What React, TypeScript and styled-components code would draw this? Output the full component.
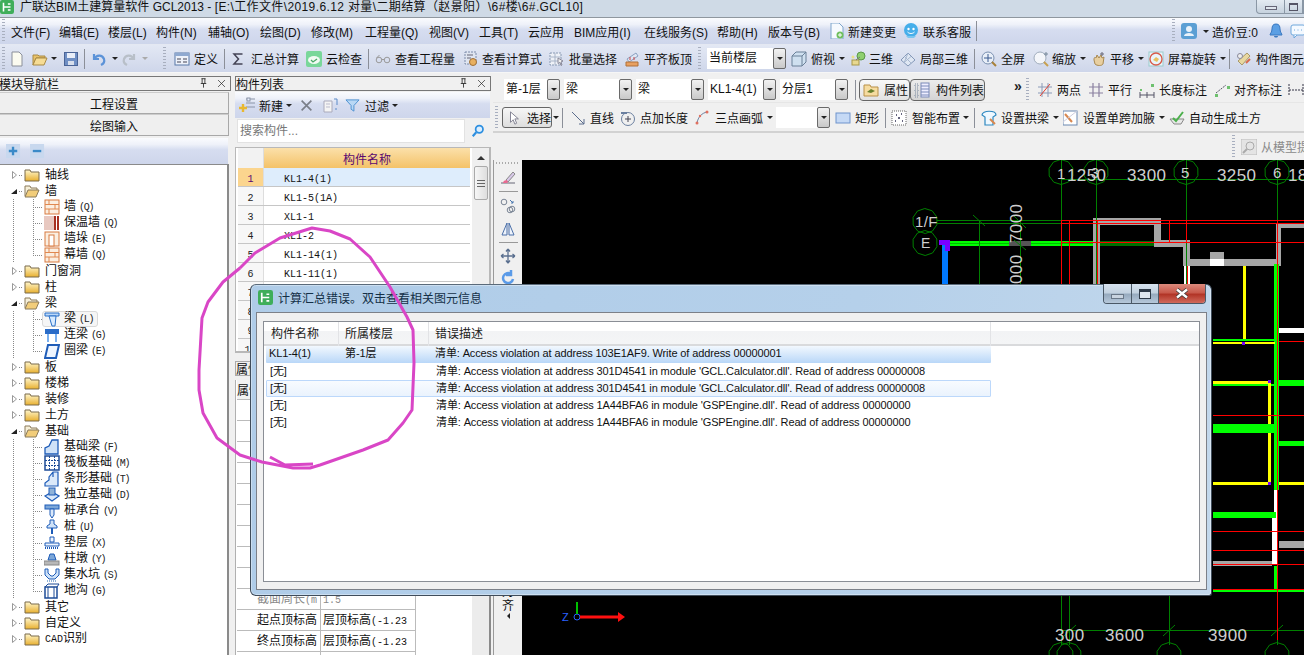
import React from 'react';
import styled, { createGlobalStyle } from 'styled-components';

const UI = '"Liberation Sans","Noto Sans CJK SC",sans-serif';
const MONO = '"Liberation Mono","Noto Sans CJK SC",monospace';

const Global = createGlobalStyle`
  html, body { margin: 0; padding: 0; background: #f0f0f0; }
  * { box-sizing: border-box; }
  body { font-family: ${UI}; font-size: 12px; color: #111; }
`;

/* ---------- icons ---------- */
const icons: Record<string, React.ReactNode> = {
  doc: <path d="M3 1h7l3 3v11H3z" fill="#fbfbf0" stroke="#8a8f9a" />,
  open: <><path d="M1 4h5l1 1h6v2H4L1 14z" fill="#e8c26a" stroke="#a98a44" /><path d="M1 14l3-7h11l-3 7z" fill="#f6dc94" stroke="#a98a44" /></>,
  save: <><rect x="1.5" y="1.5" width="13" height="13" fill="#6f8fc4" stroke="#4a6496" /><rect x="4" y="2" width="8" height="5" fill="#e9eef8" /><rect x="5" y="10" width="6" height="4" fill="#d8dfec" /></>,
  undo: <path d="M3 3v5h5M3.500 8C5 4 11 3 13 8c1 3-1 5-3 6" fill="none" stroke="#5c93d8" strokeWidth="2.2" />,
  redo: <path d="M13 3v5H8M12.500 8C11 4 5 3 3 8c-1 3 1 5 3 6" fill="none" stroke="#b8bfc8" strokeWidth="2.2" />,
  define: <><rect x="1" y="2" width="14" height="12" fill="#eef2fa" stroke="#5878a8" /><rect x="1" y="2" width="14" height="3" fill="#8fa9d0" /><path d="M3 8h4M3 11h4M9 8h4M9 11h4" stroke="#445" /></>,
  sigma: <path d="M12.500 3H4l4.500 5L4 13h8.500" fill="none" stroke="#445" strokeWidth="1.500" />,
  cloud: <><rect x="0" y="0" width="16" height="16" rx="2" fill="#79d79a" /><ellipse cx="8" cy="9" rx="6" ry="4" fill="#f2fbf4" /><path d="M5 9l2 2 4-3" fill="none" stroke="#4aa868" strokeWidth="1.300" /></>,
  glasses: <><circle cx="4" cy="9" r="2.800" fill="none" stroke="#999" /><circle cx="12" cy="9" r="2.800" fill="none" stroke="#999" /><path d="M6.800 8.500h2.400M1.500 7l3-3" stroke="#999" fill="none" /></>,
  calc: <><rect x="2" y="1" width="11" height="12" fill="#dfe5f0" stroke="#7a8aa8" strokeDasharray="2 1" /><circle cx="10" cy="11" r="3.500" fill="#e8b060" stroke="#a07038" /><path d="M4 4h6M4 7h4" stroke="#667" /></>,
  batch: <><path d="M1 2h11v12H1z" fill="#eef1f7" stroke="#8899b3" strokeDasharray="2 1" /><path d="M1 6h11M1 10h11M6 2v12" stroke="#a8b4c8" /><path d="M9 7l5 3-2 1 1 3-1 .5-1-3-2 1z" fill="#eee" stroke="#889" /></>,
  align: <><path d="M3 8l9-6 2 3-9 6z" fill="#dfe7f4" stroke="#8ba0c0" /><path d="M2 11h12v4H2z" fill="#e8a060" stroke="#b07038" /><path d="M6 9V6M10 9V6" stroke="#c44" /></>,
  cube: <><path d="M1 5l4-4h10v10l-4 4H1z" fill="#cfe0f0" stroke="#6a8098" /><path d="M1 5h10v10M11 5l4-4" fill="none" stroke="#6a8098" /></>,
  d3: <><circle cx="11" cy="5" r="4" fill="#8fd070" stroke="#5a9848" /><rect x="2" y="9" width="7" height="5" fill="#e8d890" stroke="#a89848" /><path d="M6 9l4-3" stroke="#777" /><circle cx="3" cy="6" r="1.500" fill="#e8e088" /></>,
  part3d: <><path d="M1 9l7-7 7 7-7 6z" fill="#dfe7f3" stroke="#8498b8" /><path d="M4.500 5.500l7 7M8 2l-4 10M11 5.500l-7 6" stroke="#a8b8d0" fill="none" /></>,
  full: <><circle cx="7" cy="7" r="6" fill="#e8eff8" stroke="#7a90b0" /><path d="M7 3v8M3 7h8" stroke="#3a5a90" /><path d="M11 11l4 4" stroke="#a88038" strokeWidth="2" /></>,
  zoom: <><circle cx="7" cy="7" r="6" fill="#f4f6fa" stroke="#a0adbd" /><path d="M11 11l4 4" stroke="#c8a050" strokeWidth="2" /><path d="M13 1v4M11 3h4" stroke="#789" /></>,
  pan: <><path d="M3 9c0-3 1-3 2-2l1-3 2 3 2-3 1 3 2-1-1 7c-1 2-6 2-8 0z" fill="#e8cfa0" stroke="#a88850" /><path d="M11 1v4M9 3h4" stroke="#667" /></>,
  rotate: <><rect x="1" y="1" width="14" height="14" fill="#e9f4fb" stroke="#9cc" /><circle cx="8" cy="8" r="6" fill="none" stroke="#d85a4a" strokeWidth="1.300" /><path d="M5 9l3-3 3 2-2 3z" fill="#e8c060" /></>,
  element: <><path d="M2 10l9-8 3 3-8 9z" fill="#e8d8a0" stroke="#a89868" /><path d="M10 12l4-4" stroke="#d8694a" strokeWidth="2" /><circle cx="4" cy="5" r="2.500" fill="#eee" stroke="#889" /></>,
  change: <><path d="M2 0h8l4 4v12H2z" fill="#f6fafe" stroke="#7ea5cc" /><circle cx="11" cy="12" r="3.500" fill="#6fbf5e" /><path d="M11 10v4M9 12h4" stroke="#fff" /></>,
  service: <><circle cx="8" cy="7" r="7" fill="#46aeea" /><circle cx="5.500" cy="6" r="1.200" fill="#fff" /><circle cx="10.500" cy="6" r="1.200" fill="#fff" /><path d="M4.500 9c2 2 5 2 7 0" stroke="#fff" fill="none" /><path d="M3 13h10l-2 2H5z" fill="#7cc6ef" /></>,
  user: <><rect x="0" y="0" width="16" height="16" rx="3" fill="#5b9fd4" /><circle cx="8" cy="6" r="3" fill="#e8f2fa" /><path d="M3 13c0-4 10-4 10 0z" fill="#e8f2fa" /></>,
  bell: <><path d="M8 1c-3 0-4 2-4 5 0 3-2 5-2 6h12c0-1-2-3-2-6 0-3-1-5-4-5z" fill="#5b9fe4" stroke="#3a78c0" /><path d="M6 13c0 2 4 2 4 0z" fill="#3a78c0" /></>,
  chat: <><rect x="1" y="2" width="14" height="10" rx="2" fill="#f4f9ff" stroke="#6fa8dc" /><path d="M4 12v3l3-3" fill="#f4f9ff" stroke="#6fa8dc" /><path d="M4 7h1M7.500 7h1M11 7h1" stroke="#6fa8dc" /></>,
  attr: <><path d="M1 3h6l1 2h7v9H1z" fill="#f6dca0" stroke="#b89048" /><path d="M4 10l4-3 4 2-4 2z" fill="#68802c" /></>,
  listview: <><path d="M1 2h3v3H1zM1 7h3v3H1zM1 12h3v3H1z" fill="none" stroke="#7a8aa0" strokeDasharray="1 1" /><rect x="7" y="1" width="8" height="14" fill="#eef" stroke="#7a8ab8" /><path d="M7 4h8M7 7h8M7 10h8M7 13h8" stroke="#7a8ab8" /></>,
  twopt: <><path d="M1 11h14M1 5h14M5 1v14M11 1v14" stroke="#8a9ab8" /><path d="M3 14L13 2" stroke="#e04030" /></>,
  parallel: <path d="M1 5h14M1 11h14M5 1v14M11 1v14" stroke="#8a80a0" strokeWidth="1.200" />,
  dim: <><path d="M1 13h14M1 10v6M15 10v6M8 10v6" stroke="#556" /><rect x="12" y="2" width="3" height="3" fill="#6ec06e" /><rect x="1" y="7" width="2" height="2" fill="#6ec06e" /></>,
  adim: <><path d="M2 11l10-8" stroke="#556" strokeDasharray="2 1" /><rect x="1" y="12" width="3" height="3" fill="#6ec06e" /><rect x="13" y="4" width="3" height="3" fill="#6ec06e" /></>,
  hdim: <path d="M1 8h14M1 2v12M15 2v12" stroke="#334" strokeDasharray="2 1" />,
  pointer: <path d="M4 1v12l3-3 2 5 2-1-2-5h4z" fill="#fff" stroke="#778" />,
  line: <path d="M2 2l12 12M14 9v5H9" fill="none" stroke="#5a6c8c" />,
  ptlen: <><circle cx="8" cy="9" r="6.500" fill="none" stroke="#6a7f9f" /><path d="M8 6v6M5 9h6" stroke="#445" /><path d="M1 3h6" stroke="#6a7f9f" strokeWidth="2" /></>,
  arc: <><path d="M3 13C4 7 8 3 13 2" fill="none" stroke="#6a7f9f" /><circle cx="3" cy="13" r="1.500" fill="#e07060" /><circle cx="13" cy="2" r="1.500" fill="#e07060" /><circle cx="6" cy="6" r="1.200" fill="#e07060" /></>,
  rect: <rect x="1" y="3" width="14" height="10" fill="#c5d9f5" stroke="#6f93cc" />,
  smart: <><rect x="1" y="1" width="14" height="14" fill="#fff" stroke="#666" strokeDasharray="1 1" /><path d="M5 5h1M10 4h1M7 8h2M4 11h1M11 11h1" stroke="#335" strokeWidth="1.500" /></>,
  arch: <><path d="M1 5c0-5 14-5 14 0l-3 2v8H4V7z" fill="#eef8ff" stroke="#2e88c0" strokeWidth="1.200" /><path d="M9 9l5 5" stroke="#d88850" strokeWidth="2" /></>,
  haunch: <><rect x="0" y="1" width="14" height="14" fill="#fff" stroke="#6a88b0" /><path d="M2 4l7 8" stroke="#d88850" strokeWidth="2" /><path d="M0 12l14-11" stroke="#ccd" /></>,
  earth: <><path d="M1 9l4 5h7l3-5z" fill="#e8e8e8" stroke="#888" /><path d="M4 8l3 3 7-9" fill="none" stroke="#4cb04c" strokeWidth="2" /></>,
  model: <><rect x="0" y="0" width="16" height="16" fill="#e4e4e4" stroke="#bbb" /><circle cx="9" cy="7" r="4" fill="none" stroke="#aaa" /><path d="M6 10l-4 4" stroke="#aaa" strokeWidth="2" /></>,
  addNew: <><path d="M7 2h9M7 6h9M7 10h9" stroke="#8a94a8" /><rect x="8" y="1" width="3" height="3" fill="#e8eefc" stroke="#8a94a8" /><path d="M4 7v8M0 11h8" stroke="#e8b830" strokeWidth="2.400" /></>,
  del: <path d="M2 2l12 12M14 2L2 14" stroke="#7a7f88" strokeWidth="2" />,
  copy: <><path d="M2 4h8v11H2z" fill="#f4f4f4" stroke="#aab" /><path d="M4 7h4M4 10h4" stroke="#bbc" /><path d="M12 2h3v6M15 12h-2" stroke="#5a8ac8" fill="none" /></>,
  filter: <path d="M1 2h14L9.500 8v6l-3-2V8z" fill="#b9d8f5" stroke="#4a8fd0" />,
  search: <><circle cx="9.500" cy="6" r="4.200" fill="#dbeeff" stroke="#2d8fe0" strokeWidth="2" /><path d="M6 9.500L2 14" stroke="#2d8fe0" strokeWidth="2.400" /></>,
  brush: <><path d="M1 13h14" stroke="#667" /><path d="M6 10l7-8 2 2-7 8z" fill="#d8c8e8" stroke="#888" /><path d="M3 13c0-2 2-3 4-3l1 2-1 1z" fill="#e86a90" /></>,
  rings: <><circle cx="4" cy="4" r="2.800" fill="none" stroke="#7a8595" /><circle cx="10" cy="12" r="2.800" fill="none" stroke="#7a8595" /><circle cx="12" cy="11" r="2.800" fill="none" stroke="#7a8595" /><path d="M10 2l3 3M13 3v2h-2" fill="none" stroke="#4a78b0" /></>,
  mirror: <><path d="M7 2L2 14h5zM9 2l5 12H9z" fill="#eef3fb" stroke="#4a6fa8" /></>,
  move: <path d="M8 1v14M1 8h14M8 1L6 3.500M8 1l2 2.500M8 15l-2-2.500M8 15l2-2.500M1 8l2.500-2M1 8l2.500 2M15 8l-2.500-2M15 8l-2.500 2" fill="none" stroke="#5a6f8f" strokeWidth="1.300" />,
  rotateV: <path d="M13 9a5 5 0 1 1-2-5M11 0v5h-5" fill="none" stroke="#5b9be8" strokeWidth="2.500" />,
  pin: <path d="M5 1h6M6 1v7M10 1v7M4 8h8M8 8v6" stroke="#111" fill="none" strokeWidth="1.100" />,
  cross: <path d="M3 3l10 10M13 3L3 13" stroke="#222" />,
  plus: <><rect width="15" height="15" fill="#c8d8ee" /><path d="M3 7.500h9M7.500 3v9" stroke="#3a8ac8" strokeWidth="2.500" /></>,
  minus: <><rect width="15" height="15" fill="#c8d8ee" /><path d="M3 7.500h9" stroke="#3a8ac8" strokeWidth="2.500" /></>,
  folder: <><path d="M1 14V3h5l1 2h8v9z" fill="url(#fg)" stroke="#7a6a4a" /></>,
  folderOpen: <><path d="M1 13V3h5l1 2h6v2" fill="#f6efd8" stroke="#8a7a5a" /><path d="M1 14l3-7h11l-3 7z" fill="#f2cd7a" stroke="#8a7a5a" /></>,
  brick: <><rect x="1" y="1" width="14" height="14" fill="#fbeee0" stroke="#d87a40" /><path d="M1 5.500h14M1 10h14M5 1v4.500M11 5.500V10M5 10v5" stroke="#e08850" /></>,
  insul: <><rect x="0" y="1" width="10" height="14" fill="#e8c8c0" /><rect x="10" y="1" width="2" height="14" fill="#a83020" /><rect x="13" y="1" width="2" height="14" fill="#a83020" /></>,
  pier: <><rect x="1" y="1" width="14" height="14" fill="#fbeee0" stroke="#d87a40" /><rect x="5" y="4" width="5" height="11" fill="#fff" stroke="#d87a40" /></>,
  beam: <><path d="M1 2h14v3H1z" fill="#bcd8f8" stroke="#2a70c8" /><path d="M5 5l3 10h3l1-10z" fill="#d8ebff" stroke="#2a70c8" /></>,
  linkbeam: <><rect x="1" y="2" width="14" height="5" fill="#2a6cc8" /><path d="M4 7v8M12 7v8" stroke="#7ab0f0" strokeWidth="2" /></>,
  ring: <path d="M4 2h11l-3 13H1z" fill="#eef5ff" stroke="#1e5cb8" strokeWidth="2" />,
  fbeam: <path d="M1 15V9l4-2 3-6h6v14z" fill="#cfe2f8" stroke="#1e5cb8" strokeWidth="1.300" />,
  raft: <><rect x="1" y="1" width="14" height="14" fill="#fff" stroke="#1e4c98" strokeWidth="1.500" /><path d="M1 5.500h14M1 10.500h14M5.500 1v14M10.500 1v14" stroke="#1e4c98" strokeDasharray="2 1" /></>,
  strip: <path d="M1 15v-3l4-3V6l4-5h5v14zM9 1v5" fill="#dbe9fa" stroke="#1e5cb8" strokeWidth="1.200" />,
  isolated: <><path d="M1 9l7-4 7 4-7 5z" fill="#dbe9fa" stroke="#1e5cb8" strokeWidth="1.300" /><rect x="5" y="1" width="6" height="7" fill="#8fb2d8" stroke="#1e5cb8" /></>,
  cap: <><rect x="1" y="2" width="14" height="4" fill="#7ba6d8" stroke="#1e5cb8" /><path d="M6 6h4v6l-2 3-2-3z" fill="#dbe9fa" stroke="#1e5cb8" /></>,
  pile: <><path d="M6 1h4v4l3 2v2H3V7l3-2z" fill="#cfe2f8" stroke="#1e5cb8" /><path d="M7 9h2v6H7z" fill="#1e5cb8" /></>,
  cushion: <><path d="M6 2h4v5H6zM1 8h14v3H1z" fill="#eef5ff" stroke="#1e5cb8" /><path d="M1 13h14" stroke="#1e5cb8" strokeDasharray="1 1" strokeWidth="2" /></>,
  plinth: <><path d="M6 3h4l2 6H4z" fill="#7ba6d8" stroke="#1e5cb8" /><rect x="0" y="10" width="15" height="4" fill="#b8b8b8" stroke="#888" /></>,
  pit: <><path d="M1 2h3v4l3 3h2l3-3V2h3v6l-4 4H5L1 8z" fill="#cfe2f8" stroke="#1e5cb8" /><path d="M3 14h10" stroke="#8fb2d8" strokeDasharray="1 1" strokeWidth="2" /></>,
  ditch: <><path d="M1 4h12v11H1z" fill="#fff" stroke="#1e4c98" strokeWidth="1.500" /><path d="M13 4l2-3H4L1 4M4 4v11M10 4v11" fill="none" stroke="#1e4c98" /></>,
  logo: <><rect width="16" height="16" rx="2.500" fill="#3fae5a" /><path d="M4 3v10M4 8h8M9 4.500h3M9 11.500h3" stroke="#fff" strokeWidth="1.800" fill="none" /></>,
};

const IconSvg = styled.svg<{ $s: number }>`
  width: ${p => p.$s}px;
  height: ${p => p.$s}px;
  flex: none;
  display: block;
`;

const Ico = ({ n, s = 16 }: { n: string; s?: number }) => (
  <IconSvg $s={s} viewBox="0 0 16 16" aria-hidden="true">
    {n === 'folder' && (
      <defs>
        <linearGradient id="fg" x1="0" y1="0" x2="0" y2="1">
          <stop offset="0" stopColor="#fff6cc" />
          <stop offset="1" stopColor="#e8b030" />
        </linearGradient>
      </defs>
    )}
    {icons[n]}
  </IconSvg>
);

/* ---------- shell ---------- */
const Page = styled.div`
  position: relative;
  width: 1304px;
  height: 655px;
  overflow: hidden;
  display: flex;
  flex-direction: column;
  background: #f0f0f0;
`;

const TitleBar = styled.div`
  height: 18px;
  flex: none;
  display: flex;
  align-items: flex-start;
  background: #cfdae6;
  border-bottom: 1px solid #8f979f;
`;
const TitleText = styled.div`
  margin-left: 6px;
  font-size: 12px;
  line-height: 15px;
  white-space: nowrap;
  flex: 1;
`;
const TitlePath = styled.span`
  letter-spacing: 0.38px;
`;
const MainWinBtns = styled.div`
  display: flex;
  height: 14px;
  border: 1px solid #8a97a5;
  border-top: 0;
  border-radius: 0 0 0 4px;
  background: linear-gradient(#e4ebf2, #c6d2de);
`;
const MainWinBtn = styled.div<{ $w: number }>`
  width: ${p => p.$w}px;
  display: flex;
  align-items: center;
  justify-content: center;
  border-right: 1px solid #8a97a5;
`;
const MinGlyph = styled.i`
  display: block;
  width: 12px;
  height: 4px;
  margin-top: 2px;
  border: 1px solid #667;
  background: #dfe6ee;
`;
const MaxGlyph = styled.i`
  display: block;
  width: 9px;
  height: 8px;
  border: 1px solid #556;
  border-top-width: 2px;
`;

const barGradient = `linear-gradient(#fafbfe 0%, #eef1f9 25%, #d6ddf0 45%, #ced6eb 100%)`;

const Strip = styled.div<{ $h: number; $bar?: boolean }>`
  height: ${p => p.$h}px;
  flex: none;
  display: flex;
  align-items: center;
  background: ${p => (p.$bar ? barGradient : '#f0f0f0')};
`;
const MenuBar = styled(Strip)`
  border-bottom: 1px solid #e4e8f2;
`;
const Tool = styled(Strip)`
  border-bottom: 1px solid #f6f6f6;
  background: linear-gradient(#e3e8f4, #ced6ea);
`;
const Slot = styled.div<{ $w: number }>`
  width: ${p => p.$w}px;
  flex: none;
  display: flex;
  align-items: center;
  white-space: nowrap;
`;
const Label = styled.span<{ $m?: number; $muted?: boolean }>`
  margin-left: ${p => p.$m ?? 4}px;
  font-size: 12px;
  color: ${p => (p.$muted ? '#8a8a8a' : '#111')};
  white-space: nowrap;
`;
const Caret = styled.i<{ $m?: number; $muted?: boolean }>`
  display: block;
  flex: none;
  margin-left: ${p => p.$m ?? 4}px;
  width: 0;
  height: 0;
  border: 3px solid transparent;
  border-bottom-width: 0;
  border-top: 3px solid ${p => (p.$muted ? '#aaa' : '#222')};
`;
const Sep = styled.i`
  display: block;
  width: 1px;
  height: 20px;
  background: #8b8f98;
`;
const Grip = styled.i<{ $h?: number }>`
  display: block;
  width: 3px;
  height: ${p => p.$h ?? 24}px;
  background: repeating-linear-gradient(#a8afbf 0 1px, transparent 1px 3px);
`;
const Field = styled.div<{ $w: number; $h?: number }>`
  width: ${p => p.$w}px;
  height: ${p => p.$h ?? 21}px;
  padding-left: 2px;
  background: #fff;
  font-size: 12px;
  line-height: 21px;
  overflow: hidden;
`;
const DropBtn = styled.div<{ $h?: number }>`
  width: 13px;
  height: ${p => p.$h ?? 21}px;
  display: flex;
  align-items: center;
  justify-content: center;
  border: 1px solid #6a6a6a;
  border-radius: 2px;
  background: linear-gradient(#f2f2f2, #c9c9c9);
  i {
    margin: 0;
  }
`;
const ToggleBtn = styled.div<{ $w: number; $on?: boolean }>`
  width: ${p => p.$w}px;
  height: 22px;
  display: flex;
  align-items: center;
  padding-left: 3px;
  border: 1px solid #666;
  border-radius: 4px;
  background: ${p => (p.$on ? 'linear-gradient(#f8f8f8,#e2e2e2)' : 'linear-gradient(#ececec,#d4d4d4)')};
`;
const PickBtn = styled.div`
  width: 50px;
  height: 21px;
  display: flex;
  align-items: center;
  padding-left: 4px;
  border: 1px solid #666;
  border-radius: 3px;
  background: linear-gradient(#f6f6f6, #dedede);
`;
const Chevron = styled.span`
  margin-top: -8px;
  font-size: 14px;
  font-weight: bold;
  color: #222;
  line-height: 10px;
`;

type It = {
  x: number;
  k?: 'sep' | 'grip' | 'sel' | 'pad' | 'toggle' | 'pick' | 'chev';
  i?: string;
  t?: string;
  c?: boolean;
  w?: number;
  m?: number;
  muted?: boolean;
  on?: boolean;
  cm?: number;
};

const Row = ({ items, end }: { items: It[]; end: number }) => (
  <>
    {items.map((it, idx) => {
      const next = idx < items.length - 1 ? items[idx + 1].x : end;
      const w = next - it.x;
      let body: React.ReactNode = null;
      if (it.k === 'sep') body = <Sep />;
      else if (it.k === 'grip') body = <Grip />;
      else if (it.k === 'chev') body = <Chevron>»</Chevron>;
      else if (it.k === 'sel')
        body = (
          <>
            <Field $w={it.w ?? 50}>{it.t}</Field>
            <DropBtn>
              <Caret $m={0} />
            </DropBtn>
          </>
        );
      else if (it.k === 'toggle')
        body = (
          <ToggleBtn $w={it.w ?? 50} $on={it.on}>
            {it.i && <Ico n={it.i} />}
            <Label $m={it.m}>{it.t}</Label>
          </ToggleBtn>
        );
      else if (it.k === 'pick')
        body = (
          <PickBtn>
            <Ico n="pointer" s={14} />
            <Label $m={6}>{it.t}</Label>
          </PickBtn>
        );
      else if (it.k !== 'pad')
        body = (
          <>
            {it.i && <Ico n={it.i} s={it.w ?? 16} />}
            {it.t && <Label $m={it.i ? it.m : 0} $muted={it.muted}>{it.t}</Label>}
            {it.c && <Caret $m={it.cm} $muted={it.muted} />}
          </>
        );
      return (
        <Slot key={idx} $w={w}>
          {body}
        </Slot>
      );
    })}
  </>
);

const menuItems: It[] = [
  { x: 0, k: 'pad' }, { x: 2, k: 'grip' },
  { x: 11, t: '文件(F)' }, { x: 59, t: '编辑(E)' }, { x: 108, t: '楼层(L)' }, { x: 156, t: '构件(N)' },
  { x: 208, t: '辅轴(O)' }, { x: 260, t: '绘图(D)' }, { x: 311, t: '修改(M)' }, { x: 365, t: '工程量(Q)' },
  { x: 429, t: '视图(V)' }, { x: 479, t: '工具(T)' }, { x: 528, t: '云应用' }, { x: 574, t: 'BIM应用(I)' },
  { x: 644, t: '在线服务(S)' }, { x: 717, t: '帮助(H)' }, { x: 768, t: '版本号(B)' },
  { x: 829, i: 'change', t: '新建变更', m: 3 }, { x: 903, i: 'service', t: '联系客服', m: 4 },
  { x: 976, k: 'sep' }, { x: 1172, k: 'grip' }, { x: 1181, i: 'user', c: true, cm: 6 },
  { x: 1212, t: '造价豆:0' }, { x: 1268, i: 'bell' }, { x: 1290, i: 'chat' },
];

const toolItems: It[] = [
  { x: 0, k: 'pad' }, { x: 2, k: 'grip' }, { x: 9, i: 'doc' }, { x: 32, i: 'open', c: true, cm: 3 }, { x: 63, i: 'save' },
  { x: 84, k: 'sep' }, { x: 91, i: 'undo', c: true, cm: 5 }, { x: 121, i: 'redo', c: true, cm: 5, muted: true },
  { x: 163, k: 'grip' }, { x: 174, i: 'define', t: '定义', m: 4 }, { x: 224, k: 'sep' },
  { x: 230, i: 'sigma', t: '汇总计算', m: 5 }, { x: 306, i: 'cloud', t: '云检查', m: 4 }, { x: 368, k: 'sep' },
  { x: 375, i: 'glasses', t: '查看工程量', m: 4 }, { x: 463, i: 'calc', t: '查看计算式', m: 3 },
  { x: 549, i: 'batch', t: '批量选择', m: 4 }, { x: 624, i: 'align', t: '平齐板顶', m: 4 }, { x: 698, k: 'grip' },
  { x: 707, k: 'sel', w: 66, t: '当前楼层' }, { x: 791, i: 'cube', t: '俯视', m: 4, c: true, cm: 4 },
  { x: 850, i: 'd3', t: '三维', m: 3 }, { x: 900, i: 'part3d', t: '局部三维', m: 4 }, { x: 974, k: 'sep' },
  { x: 981, i: 'full', t: '全屏', m: 4 }, { x: 1033, i: 'zoom', t: '缩放', m: 3, c: true }, { x: 1091, i: 'pan', t: '平移', m: 3, c: true },
  { x: 1148, i: 'rotate', t: '屏幕旋转', m: 4, c: true }, { x: 1229, k: 'sep' }, { x: 1236, i: 'element', t: '构件图元', m: 4 },
];

const selRowItems: It[] = [
  { x: 493, k: 'pad' },
  { x: 504, k: 'sel', w: 43, t: '第-1层' }, { x: 564, k: 'sel', w: 55, t: '梁' }, { x: 636, k: 'sel', w: 55, t: '梁' },
  { x: 708, k: 'sel', w: 55, t: 'KL1-4(1)' }, { x: 780, k: 'sel', w: 55, t: '分层1' }, { x: 855, k: 'sep' },
  { x: 859, k: 'toggle', w: 51, i: 'attr', t: '属性', m: 5, on: true }, { x: 910, k: 'toggle', w: 75, i: 'listview', t: '构件列表', m: 6 },
  { x: 1014, k: 'chev' }, { x: 1026, k: 'grip' },
  { x: 1037, i: 'twopt', t: '两点', m: 4 }, { x: 1088, i: 'parallel', t: '平行', m: 4 }, { x: 1139, i: 'dim', t: '长度标注', m: 4 },
  { x: 1214, i: 'adim', t: '对齐标注', m: 4 }, { x: 1288, i: 'hdim' },
];

const drawRowItems: It[] = [
  { x: 493, k: 'pad' }, { x: 495, k: 'grip' },
  { x: 502, k: 'pick', t: '选择' }, { x: 553, c: true, cm: 0 }, { x: 562, k: 'sep' },
  { x: 570, i: 'line', t: '直线', m: 4 }, { x: 620, i: 'ptlen', t: '点加长度', m: 4 }, { x: 694, i: 'arc', t: '三点画弧', m: 5, c: true },
  { x: 776, k: 'sel', w: 41 }, { x: 835, i: 'rect', t: '矩形', m: 4 }, { x: 885, k: 'sep' },
  { x: 891, i: 'smart', t: '智能布置', m: 5, c: true, cm: 3 }, { x: 974, k: 'sep' },
  { x: 981, i: 'arch', t: '设置拱梁', m: 4, c: true }, { x: 1063, i: 'haunch', t: '设置单跨加腋', m: 4, c: true },
  { x: 1169, i: 'earth', t: '自动生成土方', m: 4 },
];

/* ---------- left panels ---------- */
const Body = styled.div`
  flex: 1;
  min-height: 0;
  display: flex;
  padding-top: 3px;
`;
const NavPanel = styled.section`
  width: 231px;
  flex: none;
  display: flex;
  flex-direction: column;
`;
const DockHead = styled.header`
  height: 15px;
  flex: none;
  display: flex;
  align-items: center;
  border: 1px solid #777;
  border-left-width: 0;
  font-size: 12px;
  line-height: 13px;
  overflow: hidden;
`;
const DockTitle = styled.span`
  flex: 1;
  margin-left: -1px;
  padding-top: 4px;
  white-space: nowrap;
`;
const DockBtn = styled.span`
  width: 18px;
  display: flex;
  justify-content: center;
`;
const NavButton = styled.div`
  height: 22px;
  flex: none;
  width: 229px;
  display: flex;
  align-items: center;
  justify-content: center;
  font-size: 12px;
  background: #efefef;
  border: 1px solid #a8a8a8;
  border-left: 0;
  border-top-color: #ccc;
  &:first-of-type {
    margin-top: 1px;
  }
`;
const TreeTools = styled.div`
  width: 228px;
  height: 26px;
  flex: none;
  margin-top: 2px;
  display: flex;
  align-items: center;
  gap: 9px;
  padding-left: 6px;
  background: ${barGradient};
`;
const Tree = styled.div`
  width: 229px;
  flex: 1;
  padding-top: 2px;
  background: #fff;
  border: 1px solid #8a8a8a;
  border-width: 1px 2px 0 0;
  overflow: hidden;
`;
const TreeRow = styled.div`
  height: 16px;
  display: flex;
  align-items: center;
`;
const TreeLabel = styled.span<{ $m: number }>`
  margin-left: ${p => p.$m}px;
  font-family: ${UI};
  font-size: 12px;
  line-height: 16px;
  white-space: nowrap;
`;
const Hotkey = styled.span`
  margin-left: 3px;
  font-family: ${MONO};
  font-size: 10px;
  letter-spacing: -1.2px;
  color: #222;
`;
const Selected = styled.div`
  height: 16px;
  width: 56px;
  display: flex;
  align-items: center;
  margin-left: -2px;
  padding-left: 1px;
  border: 1px solid #d9d9d9;
  border-radius: 3px;
  background: #f6f6f6;
`;
const Mono = styled.span`
  font-family: ${MONO};
  font-size: 10px;
`;

const Guide = ({ w, open, child, last }: { w: number; open?: boolean; child?: boolean; last?: boolean }) => (
  <svg width={w} height="16" style={{ flex: 'none', display: 'block' }} aria-hidden="true">
    {!child &&
      (open ? (
        <path d="M11 11h6V6z" fill="#222" />
      ) : (
        <path d="M12.500 4.500v7l4-3.500z" fill="#fff" stroke="#999" />
      ))}
    {!child && <path d="M19 8.500h4" stroke="#888" strokeDasharray="1 1" />}
    {child && <path d="M13.500 0v16" stroke="#888" strokeDasharray="1 1" />}
    {child && <path d={last ? 'M33.500 0v8M33 8.500h10' : 'M33.500 0v16M33 8.500h10'} stroke="#888" strokeDasharray="1 1" fill="none" />}
  </svg>
);

const Folder = ({ t, open, mono }: { t: string; open?: boolean; mono?: string }) => (
  <TreeRow>
    <Guide w={24} open={open} />
    <Ico n={open ? 'folderOpen' : 'folder'} />
    <TreeLabel $m={5}>
      {mono && <Mono>{mono}</Mono>}
      {t}
    </TreeLabel>
  </TreeRow>
);
const Leaf = ({ i, t, h, last, sel }: { i: string; t: string; h: string; last?: boolean; sel?: boolean }) => {
  const content = (
    <>
      <Ico n={i} />
      <TreeLabel $m={4}>
        {t}
        <Hotkey>{h}</Hotkey>
      </TreeLabel>
    </>
  );
  return (
    <TreeRow>
      <Guide w={44} child last={last} />
      {sel ? <Selected>{content}</Selected> : content}
    </TreeRow>
  );
};

/* list panel */
const ListPanel = styled.section`
  width: 256px;
  flex: none;
  margin-left: 4px;
  display: flex;
  flex-direction: column;
`;
const ListHead = styled(DockHead)`
  border-left-width: 1px;
  padding-left: 1px;
`;
const ListTools = styled.div`
  height: 26px;
  margin: 1px 1px 0 0;
  flex: none;
  display: flex;
  align-items: center;
  background: ${barGradient};
`;
const SearchRow = styled.div`
  height: 26px;
  flex: none;
  display: flex;
  align-items: center;
  padding-left: 2px;
  margin-right: 1px;
  background: #f0f0f0;
`;
const SearchInput = styled.div`
  width: 228px;
  height: 24px;
  padding-left: 2px;
  background: #fff;
  border: 1px solid #e2e2e2;
  color: #777;
  font-size: 12px;
  line-height: 22px;
`;
const SearchBtn = styled.span`
  margin-left: 6px;
`;
const Grid = styled.div`
  height: 206px;
  margin-top: 3px;
  flex: none;
  display: flex;
  padding: 0 0 0 2px;
  background: #fff;
  border: 2px solid #b8b8b8;
  border-width: 1px 2px 2px 1px;
  overflow: hidden;
`;
const GridTable = styled.div`
  width: 232px;
  flex: none;
`;
const GridHeadRow = styled.div`
  display: flex;
  height: 20px;
`;
const Corner = styled.div`
  width: 26px;
  background: #f2f2f2;
  border-right: 1px solid #ddd;
`;
const GridHead = styled.div`
  flex: 1;
  display: flex;
  align-items: center;
  justify-content: center;
  background: linear-gradient(#fbe0aa, #f4c268);
  color: #5a0a70;
  font-size: 12px;
`;
const GridRow = styled.div`
  display: flex;
  height: 19px;
  border-bottom: 1px solid #c6c6c6;
`;
const RowNum = styled.div<{ $on?: boolean }>`
  width: 26px;
  text-align: center;
  font-family: ${MONO};
  font-size: 10px;
  line-height: 23px;
  height: 18px;
  overflow: hidden;
  background: ${p => (p.$on ? '#fbd58e' : '#f7f7f7')};
  color: ${p => (p.$on ? '#5a0a70' : '#222')};
  border-right: 1px solid #ddd;
`;
const RowName = styled.div<{ $on?: boolean }>`
  flex: 1;
  height: 18px;
  overflow: hidden;
  padding-left: 20px;
  font-family: ${MONO};
  font-size: 10px;
  line-height: 24px;
  background: ${p => (p.$on ? '#deedfc' : '#fff')};
`;
const ScrollBar = styled.div`
  width: 17px;
  margin-left: 2px;
  display: flex;
  flex-direction: column;
  align-items: center;
  background: #efefef;
`;
const ScrollUp = styled.i`
  display: block;
  width: 0;
  height: 0;
  margin: 8px 0 6px;
  border: 4px solid transparent;
  border-top-width: 0;
  border-bottom-color: #333;
`;
const ScrollThumb = styled.div`
  width: 14px;
  height: 34px;
  display: flex;
  align-items: center;
  justify-content: center;
  border: 1px solid #aaa;
  border-radius: 2px;
  background: linear-gradient(90deg, #f6f6f6, #dedede);
`;
const ThumbLines = styled.i`
  display: block;
  width: 8px;
  height: 7px;
  background: repeating-linear-gradient(#666 0 1px, transparent 1px 3px);
`;
const PropHead = styled(ListHead)`
  margin-top: 8px;
  border-color: #aaa;
`;
const PropWrap = styled.div`
  flex: 1;
  min-height: 0;
  margin-top: 4px;
  display: flex;
  border-left: 1px solid #b0b0b0;
  border-right: 2px solid #8a8a8a;
  background: #fff;
  overflow: hidden;
`;
const PropTable = styled.div`
  width: 236px;
  flex: none;
  padding-left: 1px;
`;
const PropStrip = styled.div`
  flex: 1;
  background: #ececec;
`;
const PropHeadRow = styled.div`
  height: 20px;
  width: 179px;
  display: grid;
  grid-template-columns: 84px 95px;
  font-size: 12px;
  line-height: 22px;
  background: #f2f2f2;
  border-bottom: 1px solid #bbb;
`;
const PropRow = styled.div`
  height: 21px;
  width: 179px;
  display: grid;
  grid-template-columns: 84px 95px;
  border-bottom: 1px solid #bbb;
  border-right: 1px solid #bbb;
`;
const PropName = styled.div<{ $muted?: boolean }>`
  padding-right: 3px;
  text-align: right;
  font-size: 12px;
  line-height: 20px;
  color: ${p => (p.$muted ? '#8a8a8a' : '#111')};
  border-right: 1px solid #bbb;
  white-space: nowrap;
`;
const PropVal = styled.div<{ $muted?: boolean }>`
  padding-left: 2px;
  font-size: 12px;
  line-height: 20px;
  color: ${p => (p.$muted ? '#8a8a8a' : '#111')};
  white-space: nowrap;
  overflow: hidden;
`;

/* right */
const Main = styled.section`
  flex: 1;
  min-width: 0;
  margin: -2px 0 0 2px;
  display: flex;
  flex-direction: column;
`;
const SelRow = styled(Strip)`
  padding-top: 3px;
  border-bottom: 1px solid #e6e6e6;
`;
const DrawRow = styled(Strip)`
  padding-top: 1px;
  border-bottom: 2px solid #d2d2d2;
`;
const ExtraRow = styled(Strip)`
  justify-content: flex-start;
`;
const CadRow = styled.div`
  flex: 1;
  min-height: 0;
  display: flex;
`;
const SideTools = styled.div`
  width: 29px;
  flex: none;
  display: flex;
  flex-direction: column;
  align-items: center;
  padding-top: 2px;
  background: #f0f0f0;
  border-left: 1px solid #9a9a9a;
`;
const SideGrip = styled.i`
  display: block;
  width: 24px;
  height: 2px;
  margin-bottom: 6px;
  background: repeating-linear-gradient(90deg, #aaa 0 1px, transparent 1px 3px);
`;
const SideBtn = styled.div<{ $mb: number }>`
  margin-bottom: ${p => p.$mb}px;
`;
const SideSep = styled.i<{ $mb: number }>`
  display: block;
  width: 19px;
  height: 1px;
  margin-bottom: ${p => p.$mb}px;
  background: #999;
`;
const SideText = styled.div`
  margin-top: 299px;
  width: 14px;
  font-size: 12px;
  line-height: 14px;
  text-align: center;
`;
const SideMark = styled.i`
  display: block;
  width: 0;
  height: 0;
  margin-top: 0;
  border: 3px solid transparent;
  border-left-width: 0;
  border-right-color: #222;
`;
const Canvas = styled.svg`
  flex: 1;
  display: block;
  background: #000;
`;

/* dialog */
const Dialog = styled.div`
  position: absolute;
  left: 250px;
  top: 284px;
  width: 962px;
  height: 312px;
  display: flex;
  flex-direction: column;
  padding: 0 4px 5px 5px;
  background: linear-gradient(100deg, #afcce8 0%, #b5d0ea 60%, #c3d8ec 100%);
  border: 1px solid #3f4c5a;
  border-top-color: #5a6a7a;
  border-radius: 6px 6px 3px 6px;
  box-shadow: inset 0 0 0 1px rgba(255, 255, 255, 0.35);
`;
const DialogTitle = styled.div`
  height: 27px;
  flex: none;
  display: flex;
  align-items: center;
  padding-left: 2px;
  padding-bottom: 2px;
  font-size: 12px;
  color: #143047;
`;
const TitleCaption = styled.span`
  margin-left: 5px;
  flex: 1;
`;
const WinBtns = styled.div`
  position: absolute;
  right: 5px;
  top: -1px;
  height: 20px;
  display: flex;
  border: 1px solid #4a5866;
  border-top: 0;
  border-radius: 0 0 4px 4px;
  overflow: hidden;
`;
const WinBtn = styled.div<{ $w: number; $close?: boolean }>`
  width: ${p => p.$w}px;
  display: flex;
  align-items: center;
  justify-content: center;
  background: ${p =>
    p.$close
      ? 'linear-gradient(#dc8a7c 0%, #c85a4c 45%, #b23527 55%, #d06a5c 100%)'
      : 'linear-gradient(#d6e2ee 0%, #c3d2e0 45%, #97abbf 55%, #b6c8da 100%)'};
  border-right: 1px solid #4a5866;
  &:last-child {
    border-right: 0;
  }
`;
const WinMin = styled.i`
  display: block;
  width: 13px;
  height: 5px;
  margin-top: 6px;
  border: 1px solid #6a7888;
  background: #c9d4e0;
`;
const WinMax = styled.i`
  display: block;
  width: 12px;
  height: 10px;
  border: 1px solid #2e3a48;
  border-top-width: 3px;
  background: #dfe7ef;
`;
const WinClose = styled.svg`
  width: 14px;
  height: 11px;
`;
const DialogBody = styled.div`
  flex: 1;
  min-height: 0;
  padding: 8px 6px 7px 6px;
  background: #f0f0f0;
  border: 1px solid #7c8088;
`;
const ErrList = styled.div`
  height: 100%;
  background: #fff;
  border: 1px solid #8a8e95;
  padding-top: 0;
`;
const ErrHead = styled.div`
  height: 24px;
  display: grid;
  grid-template-columns: 75px 90px 562px 1fr;
  background: linear-gradient(#fff 0, #fff 40%, #f2f3f5 42%, #f4f5f6 100%);
  border-bottom: 2px solid #d9dadc;
  font-size: 12px;
  line-height: 24px;
`;
const ErrHeadCell = styled.div<{ $pad: number }>`
  padding-left: ${p => p.$pad}px;
  border-right: 1px solid #e2e3e6;
  color: #222;
`;
const ErrRows = styled.div`
  margin-left: 2px;
  width: 725px;
`;
const ErrRow = styled.div<{ $state?: 'sel' | 'hover' }>`
  height: 17px;
  display: grid;
  grid-template-columns: 73px 90px 1fr;
  font-size: 11px;
  letter-spacing: -0.12px;
  line-height: 15px;
  white-space: nowrap;
  border: 1px ${p => (p.$state === 'sel' ? 'dotted #223' : 'solid')}
    ${p => (p.$state === 'sel' ? '#223' : p.$state === 'hover' ? '#bcd8fb' : 'transparent')};
  border-radius: 1px;
  background: ${p =>
    p.$state === 'sel' ? 'linear-gradient(#f2f8fe, #b9d7f8)' : p.$state === 'hover' ? 'linear-gradient(#f8fbff,#eaf3fd)' : 'transparent'};
`;
const ErrCell = styled.div<{ $pad: number }>`
  padding-left: ${p => p.$pad}px;
  overflow: visible;
`;

const Overlay = styled.svg`
  position: absolute;
  left: 0;
  top: 0;
  pointer-events: none;
`;

/* ---------- CAD drawing ---------- */
const ring = (cx: number, cy: number, r: number) =>
  Array.from({ length: 10 }, (_, i) => {
    const a = (i * Math.PI) / 5 + 0.3;
    return `${(cx + r * Math.cos(a)).toFixed(1)},${(cy + r * Math.sin(a)).toFixed(1)}`;
  }).join(' ');

type R = [number, number, number, number, string];
const G = '#00ff00';
const Y = '#ffff00';
const W = '#ffffff';
const A = '#a6a6a6';
const RD = '#ff0000';
const D = '#008000';
const rects: R[] = [
  [942, 245, 6, 40, '#0078ff'],
  [939, 240, 11, 5, '#7a00ff'], [945, 245, 5, 6, '#7a00ff'],
  [950, 241, 146, 5, G], [950, 243, 146, 1, '#0b0'], [1009, 241, 22, 5, '#555'],
  [1096, 241, 90, 5, '#007000'],
  [1093, 218, 68, 7, A], [1093, 218, 7, 67, A], [1154, 225, 7, 22, A], [1154, 240, 35, 7, A],
  [1183, 240, 7, 26, A], [1183, 259, 98, 7, A], [1210, 252, 14, 7, A], [1210, 259, 14, 7, W],
  [1276, 223, 5, 43, A], [1276, 223, 28, 5, A],
  [1184, 266, 6, 19, W], [1186, 266, 2, 19, RD],
  [1243, 266, 3, 74, Y], [1274, 264, 5, 226, G],
  [1213, 339, 62, 2, G], [1213, 342, 62, 2, Y], [1242, 342, 3, 3, '#7a00ff'],
  [1279, 328, 25, 5, W],
  [1213, 381, 57, 3, Y], [1213, 384, 62, 2, G], [1279, 380, 25, 6, G], [1268, 381, 3, 102, Y], [1268, 380, 3, 3, '#7a00ff'],
  [1213, 424, 62, 9, G], [1279, 441, 25, 5, G],
  [1213, 482, 57, 3, Y], [1279, 482, 25, 3, Y], [1268, 482, 3, 3, '#7a00ff'],
  [1274, 490, 4, 28, W], [1272, 518, 5, 46, W], [1213, 512, 63, 6, G],
  [1213, 561, 59, 5, A], [1279, 541, 25, 7, A], [1274, 566, 4, 24, G], [1213, 590, 91, 2, G],
];
const reds: [number, number, number, number][] = [
  [1061, 220.5, 1304, 220.5], [1061, 223.5, 1304, 223.5], [1061, 242.5, 1304, 242.5],
  [1061.5, 220, 1061.5, 285], [1069.5, 220, 1069.5, 285], [1097.5, 220, 1097.5, 285], [1169.5, 220, 1169.5, 243],
  [1186.5, 220, 1186.5, 243], [1277.5, 220, 1277.5, 640],
  [1279, 341.5, 1304, 341.5], [1213, 415.5, 1304, 415.5], [1213, 531.5, 1304, 531.5], [1213, 550.5, 1304, 550.5],
  [1213, 564.5, 1304, 564.5], [1213, 589.5, 1304, 589.5],
];
const greens: [number, number, number, number][] = [
  [1061, 179.5, 1304, 179.5], [937, 220.5, 1061, 220.5], [937, 223.5, 1061, 223.5],
  [1061.5, 160, 1061.5, 284], [1096.5, 160, 1096.5, 284], [1186.5, 160, 1186.5, 284], [1277.5, 160, 1277.5, 284],
  [979.5, 220, 979.5, 284], [1020.5, 222, 1020.5, 284], [973, 215, 985, 226], [1014, 216, 1026, 228], [1014, 240, 1026, 250],
  [1061.5, 596, 1061.5, 645], [1069.5, 596, 1069.5, 645], [1169.5, 596, 1169.5, 645], [1277.5, 590, 1277.5, 645],
  [1060, 630.5, 1304, 630.5], [1064, 636, 1076, 625], [1163, 636, 1175, 625], [1271, 636, 1283, 625],
];
const cadText: [string, number, number][] = [
  ['1250', 1067, 181], ['3300', 1127, 181], ['3250', 1217, 181], ['18', 1288, 181],
  ['300', 1055, 641], ['3600', 1105, 641], ['3900', 1208, 641],
];
const CadText = styled.text<{ $s?: number }>`
  font-family: "Liberation Sans", sans-serif;
  font-size: ${p => p.$s ?? 17}px;
  fill: #cfcfcf;
  letter-spacing: 0.4px;
`;

const CadDrawing = () => (
  <Canvas viewBox="522 160 782 495" width="782" height="495">
    {rects.map(([x, y, w, h, c], i) => (
      <rect key={i} x={x} y={y} width={w} height={h} fill={c} />
    ))}
    {greens.map(([a, b, c, d], i) => (
      <line key={i} x1={a} y1={b} x2={c} y2={d} stroke={D} />
    ))}
    {reds.map(([a, b, c, d], i) => (
      <line key={i} x1={a} y1={b} x2={c} y2={d} stroke={RD} />
    ))}
    {[[1061, 172], [1096, 172], [1186, 172], [1277, 172], [925, 221], [925, 243], [1061, 655], [1069, 655], [1169, 655], [1277, 655]].map(([x, y], i) => (
      <polygon key={i} points={ring(x, y, 12.5)} fill="none" stroke={D} />
    ))}
    {cadText.map(([t, x, y], i) => (
      <CadText key={i} x={x} y={y}>{t}</CadText>
    ))}
    <CadText x={1057} y={179} $s={15}>1</CadText>
    <CadText x={1091} y={178} $s={14}>3</CadText>
    <CadText x={1181} y={178} $s={15}>5</CadText>
    <CadText x={1273} y={178} $s={15}>6</CadText>
    <CadText x={915} y={227} $s={15}>1/F</CadText>
    <CadText x={921} y={248} $s={14}>E</CadText>
    <CadText transform="translate(1022 243) rotate(-90)" $s={17}>7000</CadText>
    <CadText transform="translate(1022 284) rotate(-90)" $s={17}>000</CadText>
    <text x="562" y="621" fill="#2a62ff" fontFamily="Liberation Sans, sans-serif" fontSize="11">Z</text>
    <circle cx="577" cy="617" r="3" fill="none" stroke="#2a62ff" />
    <path d="M577 614v-12" stroke="#00c000" strokeWidth="2" />
    <path d="M580 617h40" stroke="#ff1010" strokeWidth="3" />
    <path d="M618 612l7 5-7 5z" fill="#ff1010" />
  </Canvas>
);

const errs: { a: string; b?: string; c: string; s?: 'sel' | 'hover' }[] = [
  { a: 'KL1-4(1)', b: '第-1层', c: "清单: Access violation at address 103E1AF9. Write of address 00000001", s: 'sel' },
  { a: '[无]', c: "清单: Access violation at address 301D4541 in module 'GCL.Calculator.dll'. Read of address 00000008" },
  { a: '[无]', c: "清单: Access violation at address 301D4541 in module 'GCL.Calculator.dll'. Read of address 00000008", s: 'hover' },
  { a: '[无]', c: "清单: Access violation at address 1A44BFA6 in module 'GSPEngine.dll'. Read of address 00000000" },
  { a: '[无]', c: "清单: Access violation at address 1A44BFA6 in module 'GSPEngine.dll'. Read of address 00000000" },
];

const listNames = ['KL1-4(1)', 'KL1-5(1A)', 'XL1-1', 'XL1-2', 'KL1-14(1)', 'KL1-11(1)', '', '', '', ''];

export default function App() {
  return (
    <>
      <Global />
      <Page>
        <TitleBar>
          <Ico n="logo" s={14} />
          <TitleText>
            广联达BIM土建算量软件 GCL2013 - <TitlePath>[E:\工作文件\2019.6.12 对量\二期结算（赵景阳）\6#楼\6#.GCL10]</TitlePath>
          </TitleText>
          <MainWinBtns>
            <MainWinBtn $w={28}><MinGlyph /></MainWinBtn>
            <MainWinBtn $w={18}><MaxGlyph /></MainWinBtn>
          </MainWinBtns>
        </TitleBar>
        <MenuBar $h={27} $bar>
          <Row items={menuItems} end={1304} />
        </MenuBar>
        <Tool $h={28}>
          <Row items={toolItems} end={1304} />
        </Tool>
        <Body>
          <NavPanel>
            <DockHead>
              <DockTitle>模块导航栏</DockTitle>
              <DockBtn><Ico n="pin" s={11} /></DockBtn>
              <DockBtn><Ico n="cross" s={11} /></DockBtn>
            </DockHead>
            <NavButton>工程设置</NavButton>
            <NavButton>绘图输入</NavButton>
            <TreeTools>
              <Ico n="plus" s={15} />
              <Ico n="minus" s={15} />
            </TreeTools>
            <Tree>
              <Folder t="轴线" />
              <Folder t="墙" open />
              <Leaf i="brick" t="墙" h="(Q)" />
              <Leaf i="insul" t="保温墙" h="(Q)" />
              <Leaf i="pier" t="墙垛" h="(E)" />
              <Leaf i="brick" t="幕墙" h="(Q)" last />
              <Folder t="门窗洞" />
              <Folder t="柱" />
              <Folder t="梁" open />
              <Leaf i="beam" t="梁" h="(L)" sel />
              <Leaf i="linkbeam" t="连梁" h="(G)" />
              <Leaf i="ring" t="圈梁" h="(E)" last />
              <Folder t="板" />
              <Folder t="楼梯" />
              <Folder t="装修" />
              <Folder t="土方" />
              <Folder t="基础" open />
              <Leaf i="fbeam" t="基础梁" h="(F)" />
              <Leaf i="raft" t="筏板基础" h="(M)" />
              <Leaf i="strip" t="条形基础" h="(T)" />
              <Leaf i="isolated" t="独立基础" h="(D)" />
              <Leaf i="cap" t="桩承台" h="(V)" />
              <Leaf i="pile" t="桩" h="(U)" />
              <Leaf i="cushion" t="垫层" h="(X)" />
              <Leaf i="plinth" t="柱墩" h="(Y)" />
              <Leaf i="pit" t="集水坑" h="(S)" />
              <Leaf i="ditch" t="地沟" h="(G)" last />
              <Folder t="其它" />
              <Folder t="自定义" />
              <Folder t="识别" mono="CAD" />
            </Tree>
          </NavPanel>
          <ListPanel>
            <ListHead>
              <DockTitle>构件列表</DockTitle>
              <DockBtn><Ico n="pin" s={11} /></DockBtn>
              <DockBtn><Ico n="cross" s={11} /></DockBtn>
            </ListHead>
            <ListTools>
              <Row
                end={256}
                items={[
                  { x: 0, k: 'pad' },
                  { x: 4, i: 'addNew', t: '新建', m: 4, c: true, cm: 3 },
                  { x: 65, i: 'del', w: 13 },
                  { x: 87, i: 'copy' },
                  { x: 110, i: 'filter', w: 15, t: '过滤', m: 5, c: true, cm: 3 },
                ]}
              />
            </ListTools>
            <SearchRow>
              <SearchInput>搜索构件...</SearchInput>
              <SearchBtn><Ico n="search" s={14} /></SearchBtn>
            </SearchRow>
            <Grid>
              <GridTable>
                <GridHeadRow>
                  <Corner />
                  <GridHead>构件名称</GridHead>
                </GridHeadRow>
                {listNames.map((n, i) => (
                  <GridRow key={i}>
                    <RowNum $on={i === 0}>{i + 1}</RowNum>
                    <RowName $on={i === 0}>{n}</RowName>
                  </GridRow>
                ))}
              </GridTable>
              <ScrollBar>
                <ScrollUp />
                <ScrollThumb><ThumbLines /></ScrollThumb>
              </ScrollBar>
            </Grid>
            <PropHead>
              <DockTitle>属性编辑器</DockTitle>
            </PropHead>
            <PropWrap>
              <PropTable>
                <PropHeadRow>
                  <span>属性名称</span>
                  <span>属性值</span>
                </PropHeadRow>
                {Array.from({ length: 9 }, (_, i) => (
                  <PropRow key={i}>
                    <PropName />
                    <PropVal />
                  </PropRow>
                ))}
                <PropRow>
                  <PropName $muted>截面周长<Mono>(m</Mono></PropName>
                  <PropVal $muted><Mono>1.5</Mono></PropVal>
                </PropRow>
                <PropRow>
                  <PropName>起点顶标高</PropName>
                  <PropVal>层顶标高<Mono>(-1.23</Mono></PropVal>
                </PropRow>
                <PropRow>
                  <PropName>终点顶标高</PropName>
                  <PropVal>层顶标高<Mono>(-1.23</Mono></PropVal>
                </PropRow>
                <PropRow>
                  <PropName />
                  <PropVal />
                </PropRow>
              </PropTable>
              <PropStrip />
            </PropWrap>
          </ListPanel>
          <Main>
            <SelRow $h={29}>
              <Row items={selRowItems} end={1304} />
            </SelRow>
            <DrawRow $h={30}>
              <Row items={drawRowItems} end={1304} />
            </DrawRow>
            <ExtraRow $h={27}>
              <Row
                end={1304}
                items={[
                  { x: 493, k: 'pad' },
                  { x: 1232, k: 'grip' },
                  { x: 1241, i: 'model', t: '从模型提取', m: 4, muted: true },
                ]}
              />
            </ExtraRow>
            <CadRow>
              <SideTools>
                <SideGrip />
                <SideBtn $mb={5}><Ico n="brush" /></SideBtn>
                <SideSep $mb={6} />
                <SideBtn $mb={7}><Ico n="rings" /></SideBtn>
                <SideBtn $mb={5}><Ico n="mirror" /></SideBtn>
                <SideSep $mb={5} />
                <SideBtn $mb={6}><Ico n="move" /></SideBtn>
                <SideBtn $mb={0}><Ico n="rotateV" /></SideBtn>
                <SideText>对齐</SideText>
                <SideMark />
              </SideTools>
              <CadDrawing />
            </CadRow>
          </Main>
        </Body>

        <Dialog>
          <DialogTitle>
            <Ico n="logo" s={15} />
            <TitleCaption>计算汇总错误。双击查看相关图元信息</TitleCaption>
          </DialogTitle>
          <WinBtns>
            <WinBtn $w={28}><WinMin /></WinBtn>
            <WinBtn $w={27}><WinMax /></WinBtn>
            <WinBtn $w={46} $close>
              <WinClose viewBox="0 0 14 11" aria-hidden="true">
                <path d="M2 1.500l10 8M12 1.500l-10 8" stroke="#3a3a3a" strokeWidth="4" />
                <path d="M2 1.500l10 8M12 1.500l-10 8" stroke="#fff" strokeWidth="2.400" />
              </WinClose>
            </WinBtn>
          </WinBtns>
          <DialogBody>
            <ErrList>
              <ErrHead>
                <ErrHeadCell $pad={7}>构件名称</ErrHeadCell>
                <ErrHeadCell $pad={6}>所属楼层</ErrHeadCell>
                <ErrHeadCell $pad={6}>错误描述</ErrHeadCell>
              </ErrHead>
              <ErrRows>
                {errs.map((e, i) => (
                  <ErrRow key={i} $state={e.s}>
                    <ErrCell $pad={3}>{e.a}</ErrCell>
                    <ErrCell $pad={6}>{e.b}</ErrCell>
                    <ErrCell $pad={6}>{e.c}</ErrCell>
                  </ErrRow>
                ))}
              </ErrRows>
            </ErrList>
          </DialogBody>
        </Dialog>

        <Overlay width="1304" height="655" viewBox="0 0 1304 655" aria-hidden="true">
          <path
            d="M240 268 L223 282 L208 302 L202 318 L199 370 L199 390 L203 413 L217 438 L240 455 L262 462 L293 468 L310 468 L320 465 L363 450 L388 440 L403 423 L412 410 L414 363 L413 330 L407 317 L390 287 L370 257 L350 239 L330 231 L312 228 L280 238 L255 253 L240 268"
            fill="none"
            stroke="#d946c6"
            strokeWidth="3"
            strokeLinejoin="round"
          />
          <path d="M270 457 L285 465 L313 464" fill="none" stroke="#d946c6" strokeWidth="3" />
        </Overlay>
      </Page>
    </>
  );
}
